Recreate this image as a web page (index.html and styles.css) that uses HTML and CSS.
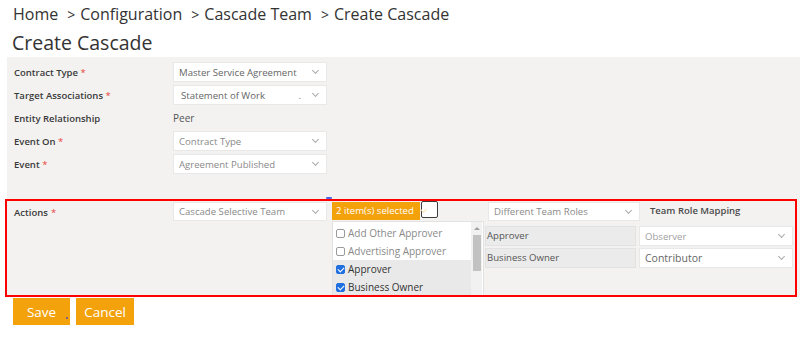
FILE: index.html
```html
<!DOCTYPE html>
<html>
<head>
<meta charset="utf-8">
<link rel="stylesheet" href="styles.css">
</head>
<body>
<div class="crumbs"><span>Home</span><span class="sep">&gt;</span><span>Configuration</span><span class="sep">&gt;</span><span>Cascade Team</span><span class="sep">&gt;</span><span>Create Cascade</span></div>
<h1 class="title">Create Cascade</h1>
<div class="panel">
  <div class="form">
    <div class="row"><div class="label">Contract Type <span class="req">*</span></div><div class="select dark"><span>Master Service Agreement</span><i class="chev"></i></div></div>
    <div class="row"><div class="label">Target Associations <span class="req">*</span></div><div class="select dark indent"><span>Statement of Work</span><span class="dot">.</span><i class="chev"></i></div></div>
    <div class="row"><div class="label">Entity Relationship</div><div class="value">Peer</div></div>
    <div class="row"><div class="label">Event On <span class="req">*</span></div><div class="select"><span>Contract Type</span><i class="chev"></i></div></div>
    <div class="row"><div class="label">Event <span class="req">*</span></div><div class="select"><span>Agreement Published</span><i class="chev"></i></div></div>
  </div>
  <div class="spacer"><div class="blue"></div></div>
  <div class="actions">
    <div class="label act-label">Actions <span class="req">*</span></div>
    <div class="select"><span>Cascade Selective Team</span><i class="chev"></i></div>
    <div class="multi">
      <div class="multi-head"><div class="ms-btn">2 item(s) selected <i class="chev white"></i></div><div class="box"></div></div>
      <div class="list">
        <div class="items">
          <div class="item"><span class="cb"></span>Add Other Approver</div>
          <div class="item"><span class="cb"></span>Advertising Approver</div>
          <div class="item on"><span class="cb checked"></span>Approver</div>
          <div class="item on"><span class="cb checked"></span>Business Owner</div>
        </div>
        <div class="scroll"><div class="arrow"></div><div class="thumb"></div></div>
      </div>
    </div>
    <div class="mapping">
      <div class="map-head"><div class="select roles"><span>Different Team Roles</span><i class="chev"></i></div><div class="map-title">Team Role Mapping</div></div>
      <div class="map-row"><div class="cell">Approver</div><div class="select map-sel light"><span>Observer</span><i class="chev"></i></div></div>
      <div class="map-row"><div class="cell">Business Owner</div><div class="select map-sel dark big"><span>Contributor</span><i class="chev"></i></div></div>
    </div>
  </div>
</div>
<div class="buttons"><button class="btn save">Save</button><button class="btn">Cancel</button></div>
<div class="highlight"></div>
</body>
</html>
```
FILE: styles.css
```css
* { box-sizing: border-box; }
body { margin: 0; font-family: "Open Sans", "Noto Sans", sans-serif; color: #333; background: #fff; width: 800px; height: 352px; overflow: hidden; position: relative; }
.crumbs { height: 28px; line-height: 28px; padding-left: 13px; font-size: 16px; color: #333; white-space: nowrap; }
.crumbs .sep { margin: 0 5px 0 9px; font-size: 14px; }
.title { margin: 0; height: 29px; line-height: 29px; padding-left: 12px; font-size: 19.5px; font-weight: 400; color: #333; }
.panel { margin-left: 7px; background: #f3f2f1; padding: 5px 0 0 7px; height: 240px; overflow: hidden; }
.form { display: grid; row-gap: 3px; }
.row { display: flex; align-items: center; height: 20px; }
.label { width: 159px; flex: none; font-size: 9.5px; font-weight: 600; color: #3a3a3a; }
.act-label { height: 21px; display: flex; align-items: center; gap: 3px; }
.req { color: #e8433a; font-weight: 400; }
.value { font-size: 10px; color: #555; }
.select { width: 154px; height: 20px; background: #fff; border: 1px solid #e8e8e8; display: flex; align-items: center; padding: 0 6px 0 5px; font-size: 9.6px; color: #8a8a8a; white-space: nowrap; }
.select span:first-child { flex: 1; overflow: hidden; }
.select.dark { color: #666; }
.select.indent { padding-left: 7px; }
.select .dot { flex: none; margin-right: 12px; color: #777; }
.chev { flex: none; width: 5px; height: 5px; border-right: 1px solid #aaa; border-bottom: 1px solid #aaa; transform: rotate(45deg); margin-top: -3px; margin-right: 2px; }
.chev.white { border-color: #fbe2b4; display: inline-block; margin-left: 5px; margin-top: 0; vertical-align: 2px; }
.spacer { height: 28px; position: relative; }
.blue { position: absolute; left: 312px; top: 23px; width: 6px; height: 2px; background: #4a63e8; border-radius: 2px; }
.actions { display: flex; align-items: flex-start; height: 95px; }
.actions > .select { height: 19px; }
.multi { width: 152px; margin-left: 5px; flex: none; }
.multi-head { display: flex; align-items: flex-start; height: 19px; }
.ms-btn { width: 88px; height: 18px; background: #f4a20c; color: #fff; font-size: 9.6px; line-height: 18px; padding-left: 4px; white-space: nowrap; }
.box { width: 17px; height: 17px; margin-left: 1px; margin-top: -1px; border: 1px solid #3c3c3c; border-radius: 2px; background: #fff; }
.list { height: 76px; border: 1px solid #e2e2e2; border-bottom: none; background: #fff; display: flex; overflow: hidden; }
.items { flex: 1; padding-top: 2px; }
.item { height: 18px; display: flex; align-items: center; padding-left: 3px; font-size: 10px; color: #8a8a8a; white-space: nowrap; }
.item.on { background: #e9e9e9; color: #333; }
.cb { width: 9px; height: 9px; border: 1px solid #9a9a9a; border-radius: 2px; margin-right: 3px; background: #fff; position: relative; }
.cb.checked { background: #1f6fe0; border-color: #1f6fe0; }
.cb.checked::after { content: ""; position: absolute; left: 2px; top: 0px; width: 3px; height: 5px; border-right: 1.5px solid #fff; border-bottom: 1.5px solid #fff; transform: rotate(45deg); }
.scroll { width: 11px; margin-right: 1px; background: #f1f1f1; display: flex; flex-direction: column; align-items: center; }
.arrow { width: 0; height: 0; border-left: 3px solid transparent; border-right: 3px solid transparent; border-bottom: 3px solid #a0a0a0; margin-top: 5px; }
.thumb { width: 8px; height: 36px; background: #c2c2c2; margin-top: 5px; }
.mapping { margin-left: 1px; flex: 1; }
.map-head { display: flex; align-items: center; height: 19px; }
.select.roles { width: 152px; height: 19px; margin-left: 3px; }
.map-title { margin-left: 10px; font-size: 9.5px; font-weight: 600; color: #4a4a4a; margin-top: -2px; }
.map-row { display: flex; align-items: center; margin-top: 3px; height: 20px; }
.map-row:nth-child(2) { margin-top: 5px; }
.map-row:nth-child(3) { margin-top: 2px; }
.cell { width: 151px; height: 20px; background: #ebebeb; border: 1px solid #e2e2e2; font-size: 9.6px; color: #555; line-height: 18px; padding-left: 1px; }
.select.map-sel { width: 154px; margin-left: 3px; }
.select.light { color: #a0a0a0; }
.select.big { font-size: 10.5px; }
.buttons { display: flex; gap: 6px; padding-left: 13px; margin-top: 1px; }
.btn { width: 57px; height: 27px; border: none; background: #f4a20c; color: #fff; font-family: "Open Sans", sans-serif; font-size: 13.5px; padding: 0; }
.btn + .btn { width: 58px; }
.save { position: relative; }
.save::after { content: ""; position: absolute; left: 53px; top: 19px; width: 2px; height: 2px; background: #5b4bb0; border-radius: 1px; }
.highlight { position: absolute; left: 5px; top: 199px; width: 792px; height: 98px; border: 2px solid #ff0000; }
```
